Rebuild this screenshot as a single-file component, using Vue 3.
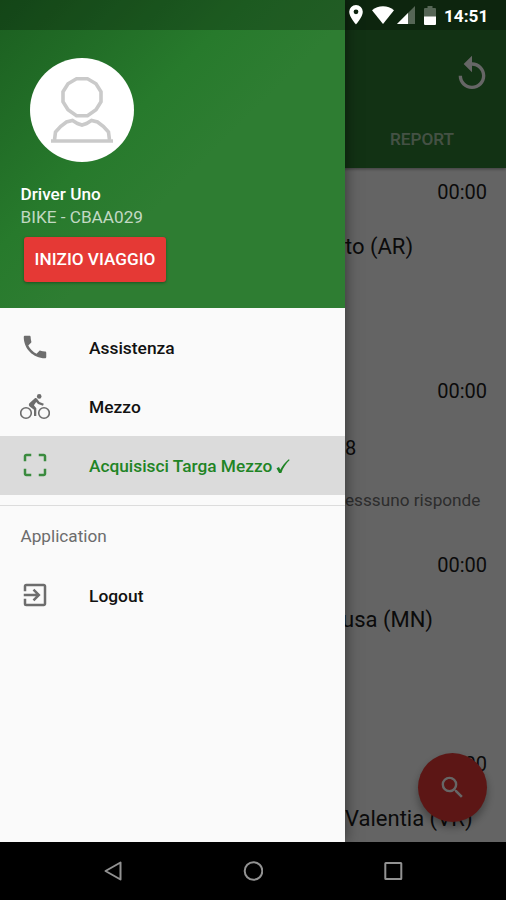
<script setup>
import { ref } from "vue";

const trips = [
  { id: 1, time: "00:00", place: "to (AR)", height: 199 },
  { id: 2, time: "00:00", place: "8", note: "esssuno risponde", height: 174 },
  { id: 3, time: "00:00", place: "usa (MN)", height: 199 },
  { id: 4, time: "00:00", place: "Valentia (VR)", height: 102 },
];

const items = [
  { id: "help", label: "Assistenza" },
  { id: "bike", label: "Mezzo" },
  { id: "scan", label: "Acquisisci Targa Mezzo", checked: true },
];

const selected = ref("scan");
</script>

<template>
  <div class="screen">
    <main class="page">
      <header class="toolbar">
        <button class="toolbar__action" type="button" aria-label="Aggiorna">
          <svg viewBox="0 0 24 24">
            <path d="M12 5V1L7 6l5 5V7c3.31 0 6 2.69 6 6s-2.69 6-6 6-6-2.69-6-6H4c0 4.42 3.58 8 8 8s8-3.58 8-8-3.58-8-8-8z" />
          </svg>
        </button>
        <span class="toolbar__tab">REPORT</span>
      </header>
      <section
        v-for="trip in trips"
        :key="trip.id"
        class="trip"
        :class="{ 'trip--noted': trip.note, 'trip--tight': trip.id === 3 }"
        :style="{ height: trip.height + 'px' }"
      >
        <span class="trip__time">{{ trip.time }}</span>
        <span class="trip__place">{{ trip.place }}</span>
        <span v-if="trip.note" class="trip__note">{{ trip.note }}</span>
      </section>
      <button class="fab" type="button" aria-label="Cerca">
        <svg viewBox="0 0 24 24">
          <path d="M15.5 14h-.79l-.28-.27A6.47 6.47 0 0 0 16 9.5 6.5 6.5 0 1 0 9.5 16c1.61 0 3.09-.59 4.23-1.57l.27.28v.79l5 4.99L20.49 19l-4.99-5zm-6 0C7.01 14 5 11.99 5 9.5S7.01 5 9.5 5 14 7.01 14 9.5 11.99 14 9.5 14z" />
        </svg>
      </button>
      <div class="scrim"></div>
    </main>

    <aside class="drawer">
      <header class="profile">
        <div class="profile__avatar">
          <svg viewBox="0 0 64 70">
            <path d="M26.500 3.800h11l8.500 5 5 8v10l-5 8-8.500 6h-11l-8.500-6-5-8v-10l5-8z" />
            <path d="M4.500 65l1-8 5-5.500 6-4.500 6-1.500 5 3 4.500 1.500 4.500-1.500 5-3 6 1.500 6 4.500 5 5.500 1 8" />
            <path d="M1 66h62" />
          </svg>
        </div>
        <span class="profile__name">Driver Uno</span>
        <span class="profile__vehicle">BIKE - CBAA029</span>
        <button class="profile__start" type="button">INIZIO VIAGGIO</button>
      </header>

      <nav class="menu">
        <a
          v-for="item in items"
          :key="item.id"
          class="menu__item"
          :class="{ 'menu__item--active': selected === item.id }"
          @click="selected = item.id"
        >
          <svg v-if="item.id === 'help'" class="menu__icon menu__icon--raised" viewBox="0 0 24 24">
            <path d="M6.540 3H4c-.55 0-1 .45-1 1 0 9.390 7.610 17 17 17 .55 0 1-.45 1-1v-3.490c0-.55-.45-1-1-1-1.240 0-2.450-.2-3.570-.57a.84.84 0 0 0-.31-.05c-.26 0-.51.1-.71.290l-2.200 2.200a15.150 15.150 0 0 1-6.590-6.580l2.200-2.210c.28-.27.36-.66.250-1.010A11.360 11.360 0 0 1 8.500 4c0-.55-.45-1-1-1z" />
          </svg>
          <svg v-else-if="item.id === 'bike'" class="menu__icon menu__icon--bike" viewBox="0 0 30 26">
            <circle class="line" cx="6" cy="19" r="5.300" />
            <circle class="line" cx="24" cy="19" r="5.300" />
            <circle cx="19.200" cy="2.400" r="2.300" />
            <path d="M9.400 9.300l5.200-4.800c.8-.6 1.700-.5 2.400.3l2.500 3.200 4.300 1.800-.8 2-5-1.800-1.800-1.900-2.300 3.200 2.400 2.900V22h-2.300v-6.300l-4.300-3.300c-1-.8-1.100-2.100-.3-3.100z" />
          </svg>
          <svg v-else class="menu__icon menu__icon--raised" viewBox="0 0 24 24">
            <path d="M3 5v4h2V5h4V3H5c-1.100 0-2 .9-2 2zm2 10H3v4c0 1.100.9 2 2 2h4v-2H5v-4zm14 4h-4v2h4c1.100 0 2-.9 2-2v-4h-2v4zm0-16h-4v2h4v4h2V5c0-1.100-.9-2-2-2z" />
          </svg>
          <span class="menu__label" :class="{ 'menu__label--long': item.checked }">{{ item.label }}</span>
          <svg v-if="item.checked" class="menu__check" viewBox="0 0 14 16">
            <path d="M0.500 10.200l2.500-1.200 1.300 2.800C6.200 8 9 4.200 12.800 1.200l.9.800C10 5.500 7 10 5.300 15H3.100z" />
          </svg>
        </a>
      </nav>

      <div class="group">
        <span class="group__title">Application</span>
        <a class="menu__item">
          <svg class="menu__icon menu__icon--raised" viewBox="0 0 24 24">
            <path d="M10.090 15.590L11.500 17l5-5-5-5-1.410 1.410L12.670 11H3v2h9.670l-2.580 2.590zM19 3H5a2 2 0 0 0-2 2v4h2V5h14v14H5v-4H3v4a2 2 0 0 0 2 2h14c1.100 0 2-.9 2-2V5c0-1.100-.9-2-2-2z" />
          </svg>
          <span class="menu__label">Logout</span>
        </a>
      </div>
    </aside>

    <div class="status">
      <svg class="status__pin" viewBox="0 0 14 20">
        <path fill-rule="evenodd" d="M7 0a6.800 6.800 0 0 0-6.800 6.800C.2 12 7 19.500 7 19.500s6.800-7.500 6.800-12.700A6.800 6.800 0 0 0 7 0zm0 4.400a2.400 2.400 0 1 1 0 4.800 2.400 2.400 0 0 1 0-4.800z" />
      </svg>
      <svg class="status__wifi" viewBox="0 0 22 18">
        <path d="M11 18L0 4.300C3 1.600 7 .2 11 .2s8 1.400 11 4.100z" />
      </svg>
      <svg class="status__signal" viewBox="0 0 18 18">
        <path class="faint" d="M18 0v18H0z" />
        <path d="M11 7v11H0z" />
      </svg>
      <svg class="status__battery" viewBox="0 0 12 19">
        <path class="faint" d="M3.500 0h5v2H11a1 1 0 0 1 1 1v8H0V3a1 1 0 0 1 1-1h2.500z" />
        <path d="M0 10.500h12V18a1 1 0 0 1-1 1H1a1 1 0 0 1-1-1z" />
      </svg>
      <span class="status__clock">14:51</span>
    </div>

    <footer class="navbar">
      <svg viewBox="0 0 20 20"><path d="M17.500 1.500v17L2.500 10z" /></svg>
      <svg viewBox="0 0 20 20"><circle cx="10.500" cy="10" r="8.800" /></svg>
      <svg viewBox="0 0 20 20"><rect x="2.300" y="2" width="16" height="16" rx="0.500" /></svg>
    </footer>
  </div>
</template>

<style>
body {
  margin: 0;
}
</style>

<style scoped>
.screen {
  position: relative;
  display: grid;
  grid-template: 842px 58px / 345px 161px;
  width: 506px;
  height: 900px;
  overflow: hidden;
  font-family: Roboto, "Liberation Sans", sans-serif;
  background: #000;
}

button {
  padding: 0;
  font-family: inherit;
  border: 0;
}

.page {
  position: relative;
  grid-area: 1 / 1 / 2 / 3;
  overflow: hidden;
  background: #fafafa;
}

.toolbar {
  display: flex;
  flex-direction: column;
  align-items: flex-end;
  box-sizing: border-box;
  height: 168px;
  padding: 54px 14px 0 0;
  background: #2e7d32;
  box-shadow: 0 1px 3px rgba(0, 0, 0, 0.4);
}

.toolbar__action {
  width: 40px;
  height: 40px;
  background: none;
}

.toolbar__action svg {
  display: block;
  width: 40px;
  height: 40px;
  fill: #fff;
}

.toolbar__tab {
  width: 66px;
  margin: 34px 36px 0 0;
  font-size: 17.200px;
  font-weight: 500;
  line-height: 22px;
  color: rgba(255, 255, 255, 0.62);
}

.trip {
  display: flex;
  flex-direction: column;
  box-sizing: border-box;
  padding: 12px 19px 0 345px;
  color: #1c1c1c;
  white-space: nowrap;
}

.trip__time {
  align-self: flex-end;
  font-size: 20px;
  line-height: 24px;
}

.trip__place {
  margin-top: 29px;
  font-size: 22px;
  line-height: 28px;
}

.trip--noted .trip__place {
  margin-top: 31px;
  font-size: 20px;
}

.trip--tight .trip__place {
  margin-left: -3px;
}

.trip__note {
  margin-top: 26px;
  font-size: 17.200px;
  line-height: 24px;
  color: #707070;
}

.fab {
  position: absolute;
  right: 19px;
  bottom: 20px;
  display: grid;
  width: 69px;
  height: 69px;
  place-items: center;
  background: #e53935;
  border-radius: 50%;
  box-shadow: 0 5px 9px rgba(0, 0, 0, 0.35);
}

.fab svg {
  width: 29px;
  height: 29px;
  fill: #fff;
}

.scrim {
  position: absolute;
  inset: 0;
  background: rgba(0, 0, 0, 0.6);
}

.drawer {
  position: relative;
  grid-area: 1 / 1;
  background: #fafafa;
  box-shadow: 0 0 14px rgba(0, 0, 0, 0.5);
}

.profile {
  display: flex;
  flex-direction: column;
  align-items: flex-start;
  box-sizing: border-box;
  height: 308px;
  padding: 58px 20px 0;
  background: linear-gradient(135deg, #1b5e20 0%, #277a2c 38%, #2e7d32 56%, #2e7d32 100%);
}

.profile__avatar {
  display: grid;
  width: 104px;
  height: 104px;
  margin-left: 10px;
  place-items: center;
  background: #fff;
  border-radius: 50%;
}

.profile__avatar svg {
  width: 64px;
  height: 70px;
  fill: none;
  stroke: #cacaca;
  stroke-width: 3.600;
}

.profile__name {
  margin: 20px 0 0 0.500px;
  font-size: 17.200px;
  font-weight: 500;
  line-height: 24px;
  color: #fff;
}

.profile__vehicle {
  margin-left: 0.500px;
  font-size: 17.200px;
  line-height: 23px;
  color: rgba(255, 255, 255, 0.72);
}

.profile__start {
  width: 142px;
  height: 45px;
  margin: 8px 0 0 4px;
  padding-bottom: 1px;
  font-size: 17.200px;
  font-weight: 500;
  color: #fff;
  background: #e53935;
  border-radius: 3px;
  box-shadow: 0 1px 3px rgba(0, 0, 0, 0.35);
}

.menu {
  padding: 10px 0;
  border-bottom: 1px solid #dcdcdc;
}

.menu__item {
  display: flex;
  align-items: center;
  height: 59px;
  padding-left: 20px;
  color: #111;
}

.menu__item--active {
  color: #1f8425;
  background: #dbdbdb;
}

.menu__icon {
  width: 30px;
  height: 30px;
  margin-right: 39px;
  fill: #6d6d6d;
}

.menu__icon--raised {
  margin-bottom: 1px;
}

.menu__item--active .menu__icon {
  fill: #3b8b3f;
}

.menu__icon--bike {
  height: 26px;
}

.line {
  fill: none;
  stroke: #6d6d6d;
  stroke-width: 1.600;
}

.menu__label {
  font-size: 17.400px;
  font-weight: 500;
}

.menu__label--long {
  font-size: 17.300px;
}

.menu__check {
  width: 14px;
  height: 16px;
  margin-left: 4px;
  fill: #1f8425;
}

.group__title {
  display: block;
  padding: 0 20.500px;
  font-size: 17.200px;
  line-height: 60px;
  color: #6c6c6c;
}

.status {
  position: absolute;
  top: 0;
  left: 0;
  display: flex;
  align-items: center;
  justify-content: flex-end;
  box-sizing: border-box;
  width: 506px;
  height: 30px;
  padding-right: 19px;
  background: rgba(0, 0, 0, 0.26);
}

.status svg {
  fill: #fff;
}

.status__pin {
  width: 14px;
  height: 20px;
  margin-right: 9px;
}

.status__wifi {
  width: 22px;
  height: 18px;
  margin-right: 3px;
}

.status__signal {
  width: 18px;
  height: 18px;
  margin-right: 9px;
}

.status__battery {
  width: 12px;
  height: 19px;
  margin-right: 8px;
}

.status .faint {
  opacity: 0.3;
}

.status__clock {
  width: 43px;
  font-size: 17.200px;
  font-weight: 700;
  line-height: 30px;
  padding-top: 2px;
  color: #fff;
}

.navbar {
  position: relative;
  display: flex;
  grid-area: 2 / 1 / 3 / 3;
  gap: 120px;
  align-items: center;
  justify-content: center;
  background: #000;
}

.navbar svg {
  width: 20px;
  height: 20px;
  fill: none;
  stroke: #929292;
  stroke-linejoin: round;
  stroke-width: 2;
}
</style>
